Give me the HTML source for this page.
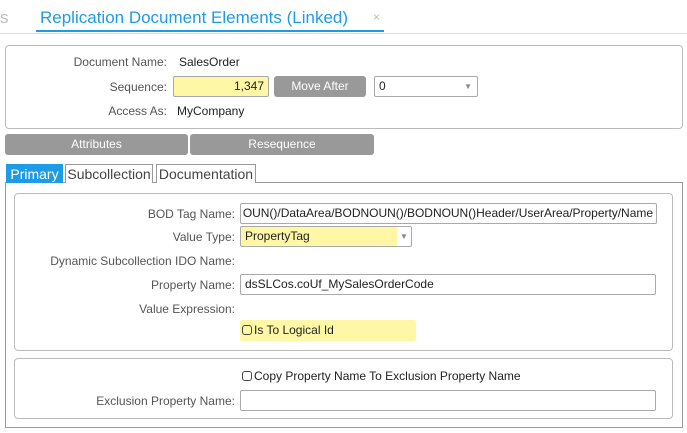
<!DOCTYPE html>
<html><head><style>
*{box-sizing:border-box;margin:0;padding:0}
body{width:687px;height:433px;background:#fff;font-family:"Liberation Sans",Arial,sans-serif;font-size:12px;color:#222;position:relative;overflow:hidden}
.a{position:absolute}
.lbl{position:absolute;text-align:right;color:#555;font-size:12px}
.inp{position:absolute;border:1px solid #aaa;border-radius:2px;background:#fff;font-size:12px;padding:0 4px;line-height:19px;white-space:nowrap;overflow:hidden}
.btn{position:absolute;background:#999;color:#fff;border-radius:3px;text-align:center;font-size:12px}
.panel{position:absolute;border:1px solid #bbb;border-radius:4px}
.tab{position:absolute;top:164px;height:19px;border:1px solid #999;border-bottom:none;font-size:14px;line-height:18px;text-align:center;color:#444;background:#fff}
.cb{display:inline-block;width:10px;height:10px;border:1px solid #444;border-radius:3px;vertical-align:-1px;margin-right:2px}
</style></head><body>
<div class="a" style="left:0;top:33px;width:687px;height:1px;background:#ddd"></div>
<div class="a" style="left:0;top:8px;color:#bbb;font-size:17px">s</div>
<div class="a" style="left:40px;top:8px;color:#1e9be6;font-size:17px">Replication Document Elements (Linked)</div>
<div class="a" style="left:373px;top:10px;color:#bbb;font-size:12px">×</div>
<div class="a" style="left:36px;top:30px;width:348px;height:2px;background:#1e9be6"></div>

<div class="panel" style="left:5px;top:45px;width:678px;height:84px"></div>
<div class="lbl" style="left:0;width:167px;top:55px">Document Name:</div>
<div class="a" style="left:179px;top:55px">SalesOrder</div>
<div class="lbl" style="left:0;width:167px;top:80px">Sequence:</div>
<div class="inp" style="left:173px;top:76px;width:96px;height:21px;background:#fdf7a6;text-align:right">1,347</div>
<div class="btn" style="left:274px;top:76px;width:92px;height:21px;line-height:21px">Move After</div>
<div class="inp" style="left:374px;top:76px;width:104px;height:21px">0<span style="position:absolute;right:5px;top:0;color:#888;font-size:8px">▼</span></div>
<div class="lbl" style="left:0;width:167px;top:104px">Access As:</div>
<div class="a" style="left:177px;top:104px">MyCompany</div>

<div class="btn" style="left:5px;top:134px;width:183px;height:21px;line-height:21px">Attributes</div>
<div class="btn" style="left:190px;top:134px;width:184px;height:21px;line-height:21px">Resequence</div>

<div class="a" style="left:5px;top:182px;width:678px;height:246px;border:1px solid #999"></div>
<div class="tab" style="left:6px;width:57px;background:#1e9be6;color:#fff;border-color:#1e9be6">Primary</div>
<div class="tab" style="left:65px;width:88px">Subcollection</div>
<div class="tab" style="left:156px;width:100px">Documentation</div>

<div class="panel" style="left:14px;top:193px;width:659px;height:158px"></div>
<div class="lbl" style="left:0;width:235px;top:207px">BOD Tag Name:</div>
<div class="inp" style="left:240px;top:203px;width:417px;height:21px"><span style="position:absolute;right:3px;top:0;letter-spacing:-0.02px">OUN()/DataArea/BODNOUN()/BODNOUN()Header/UserArea/Property/Name</span></div>
<div class="lbl" style="left:0;width:235px;top:230px">Value Type:</div>
<div class="inp" style="left:240px;top:226px;width:172px;height:21px;background:#fdf7a6">PropertyTag<span style="position:absolute;right:0;top:0;width:14px;height:19px;background:#fff;color:#888;font-size:8px;text-align:center">▼</span></div>
<div class="lbl" style="left:0;width:235px;top:254px">Dynamic Subcollection IDO Name:</div>
<div class="lbl" style="left:0;width:235px;top:278px">Property Name:</div>
<div class="inp" style="left:240px;top:274px;width:416px;height:21px">dsSLCos.coUf_MySalesOrderCode</div>
<div class="lbl" style="left:0;width:235px;top:302px">Value Expression:</div>
<div class="a" style="left:240px;top:320px;width:176px;height:21px;background:#fdf7a6;border-radius:2px;line-height:21px;padding-left:2px"><span class="cb"></span>Is To Logical Id</div>

<div class="panel" style="left:14px;top:358px;width:659px;height:61px"></div>
<div class="a" style="left:242px;top:369px"><span class="cb"></span>Copy Property Name To Exclusion Property Name</div>
<div class="lbl" style="left:0;width:235px;top:394px">Exclusion Property Name:</div>
<div class="inp" style="left:240px;top:390px;width:416px;height:21px"></div>
</body></html>
